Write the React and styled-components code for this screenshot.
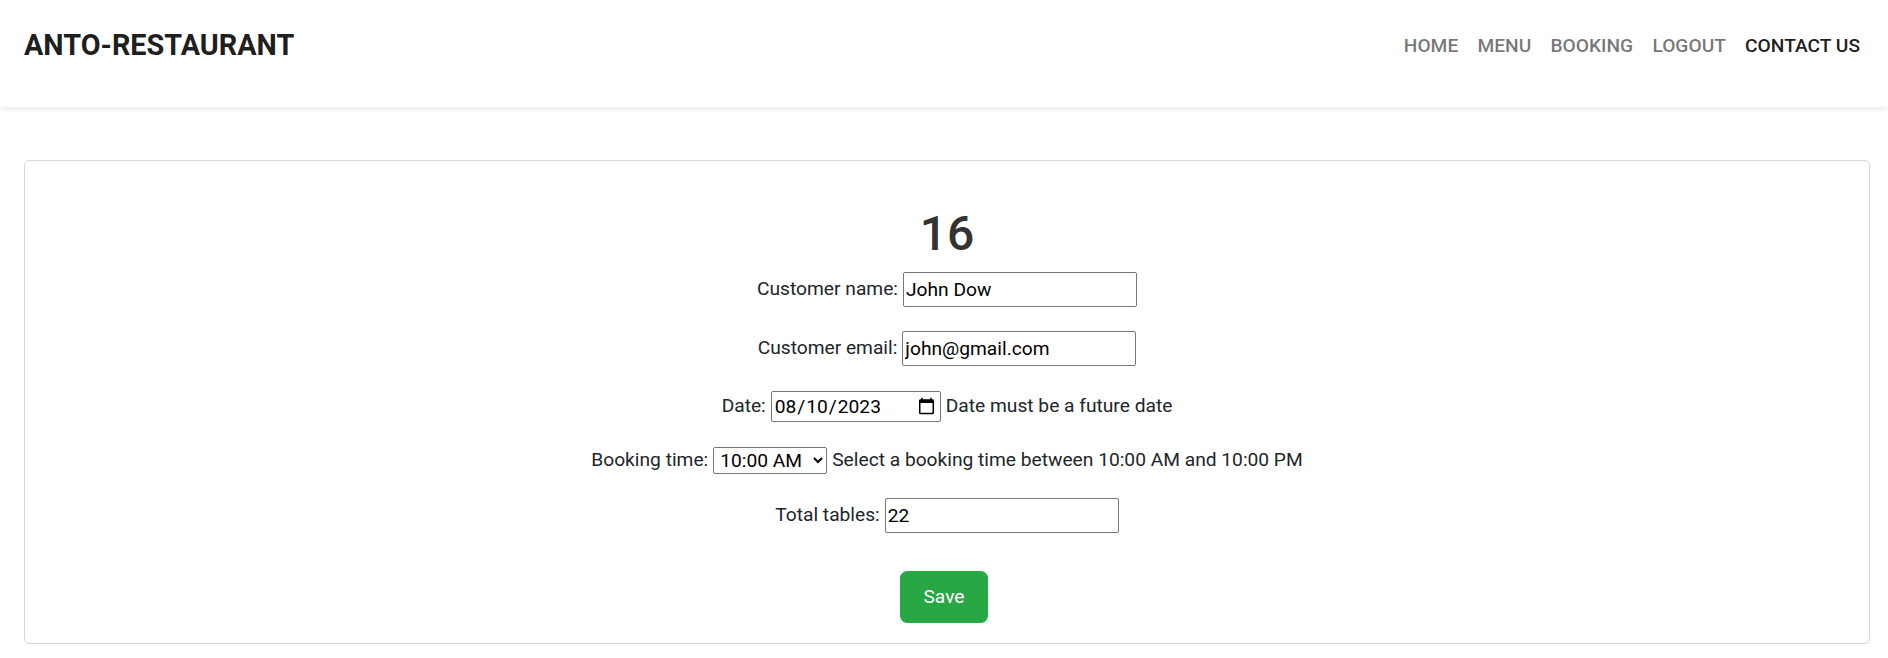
import React from 'react';
import styled, { createGlobalStyle } from 'styled-components';

const GlobalStyle = createGlobalStyle`
  * { box-sizing: border-box; }
  body {
    margin: 0;
    background: #fff;
    font-family: Roboto, "Liberation Sans", Arial, sans-serif;
    font-size: 19.2px;
    line-height: 1.5;
    color: #212529;
  }
`;

// Top navigation bar
const Header = styled.header`
  height: 107px;
  display: flex;
  align-items: center;
  justify-content: space-between;
  padding: 0 18.4px 15px 24px;
  background: #fff;
  box-shadow: 0 2px 6px rgba(0, 0, 0, 0.09);
  position: relative;
`;

const Brand = styled.a`
  font-size: 28.8px;
  font-weight: 700;
  color: rgba(0, 0, 0, 0.9);
  text-decoration: none;
  line-height: 1.5;
`;

const Nav = styled.nav`
  display: flex;
  align-items: center;
`;

const NavLink = styled.a`
  padding: 9.6px;
  font-size: 19.2px;
  font-weight: 500;
  text-transform: uppercase;
  text-decoration: none;
  color: ${(p) => (p.$active ? 'rgba(0, 0, 0, 0.9)' : 'rgba(0, 0, 0, 0.55)')};
`;

// Booking card
const Card = styled.section`
  margin: 53px 18px 15px 24px;
  border: 1px solid #d6d6d6;
  border-radius: 5px;
  padding: 44px 24px 20px;
  display: flex;
  flex-direction: column;
  align-items: center;
`;

const Title = styled.h1`
  margin: 0 0 7px;
  font-size: 48px;
  font-weight: 500;
  line-height: 1.2;
  color: #333;
`;

const Row = styled.div`
  display: flex;
  align-items: center;
  justify-content: center;
  gap: 5px;
  height: ${(p) => p.$h}px;
  margin-bottom: ${(p) => (p.$last ? 35 : 19.2)}px;
  white-space: nowrap;
`;

const TextInput = styled.input`
  width: 234px;
  height: 35px;
  padding: 1px 2px;
  border: 1px solid #767676;
  border-radius: 2px;
  font: inherit;
  color: #000;
  background: #fff;
`;

const DateInput = styled.input`
  width: 170px;
  height: 31px;
  padding: 1px 2px;
  border: 1px solid #767676;
  border-radius: 2px;
  font-family: inherit;
  font-size: 19.2px;
  color: #000;
  background: #fff;
`;

const Select = styled.select`
  width: 114px;
  height: 27px;
  padding: 0 0 0 2px;
  border: 1px solid #767676;
  border-radius: 2px;
  font-family: inherit;
  font-size: 19.2px;
  color: #000;
  background: #fff;
`;

const SaveButton = styled.button`
  width: 88px;
  height: 52px;
  margin-right: 6px;
  border: 1px solid #28a745;
  border-radius: 7px;
  background: #28a745;
  color: #fff;
  font-family: inherit;
  font-size: 19.2px;
  line-height: 1.5;
  cursor: pointer;
`;

const App = () => {
  return (
    <>
      <GlobalStyle />
      <Header>
        <Brand href="#">ANTO-RESTAURANT</Brand>
        <Nav>
          <NavLink href="#">Home</NavLink>
          <NavLink href="#">Menu</NavLink>
          <NavLink href="#">Booking</NavLink>
          <NavLink href="#">Logout</NavLink>
          <NavLink href="#" $active>Contact us</NavLink>
        </Nav>
      </Header>

      <Card>
        <Title>16</Title>
        <Row $h={40}>
          <span>Customer name:</span>
          <TextInput type="text" defaultValue="John Dow" />
        </Row>
        <Row $h={40}>
          <span>Customer email:</span>
          <TextInput type="email" defaultValue="john@gmail.com" />
        </Row>
        <Row $h={37}>
          <span>Date:</span>
          <DateInput type="date" defaultValue="2023-08-10" />
          <span>Date must be a future date</span>
        </Row>
        <Row $h={32}>
          <span>Booking time:</span>
          <Select defaultValue="10:00">
            <option value="10:00">10:00 AM</option>
            <option value="11:00">11:00 AM</option>
          </Select>
          <span>Select a booking time between 10:00 AM and 10:00 PM</span>
        </Row>
        <Row $h={41} $last>
          <span>Total tables:</span>
          <TextInput type="number" defaultValue="22" />
        </Row>
        <SaveButton type="submit">Save</SaveButton>
      </Card>
    </>
  );
};

export default App;
